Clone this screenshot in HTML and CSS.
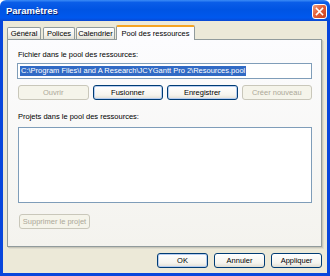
FILE: index.html
```html
<!DOCTYPE html>
<html lang="fr">
<head>
  <meta charset="UTF-8" />
  <title>Paramètres</title>
<link rel="stylesheet" href="styles.css">
</head>
<body>
  <div class="window">
    <div class="titlebar">
      <span class="title">Paramètres</span>
      <button class="close-button" aria-label="Fermer">
        <svg width="9" height="9" viewBox="0 0 9 9"><path d="M1.5 1.5 L7.5 7.5 M7.5 1.5 L1.5 7.5" stroke="#fff" stroke-width="1.6" stroke-linecap="square"/></svg>
      </button>
    </div>

    <div class="frame">
      <div class="tabs">
        <div class="tab tab-general">Général</div>
        <div class="tab tab-polices">Polices</div>
        <div class="tab tab-calendrier">Calendrier</div>
        <div class="tab tab-pool active">Pool des ressources</div>
      </div>

      <div class="panel">
        <label class="field-label">Fichier dans le pool des ressources:</label>
        <div class="text-input"><span class="selected">C:\Program Files\I and A Research\JCYGantt Pro 2\Resources.pool</span></div>

        <div class="button-row">
          <button class="btn" disabled>Ouvrir</button>
          <button class="btn focus">Fusionner</button>
          <button class="btn focus">Enregistrer</button>
          <button class="btn" disabled>Créer nouveau</button>
        </div>

        <label class="field-label second">Projets dans le pool des ressources:</label>
        <div class="listbox"></div>

        <div class="button-row bottom">
          <button class="btn" disabled>Supprimer le projet</button>
        </div>
      </div>

      <div class="footer">
        <button class="btn small focus">OK</button>
        <button class="btn small">Annuler</button>
        <button class="btn small">Appliquer</button>
      </div>
    </div>
  </div>
</body>
</html>
```

FILE: styles.css
```css
:root {
  --face: #ece9d8;
  --xp-blue: #0846dc;
  --btn-border: #003c74;
  --tab-border: #919b9c;
  --field-border: #7f9db9;
  --disabled: #aca899;
}

body {
  margin: 0;
  background: #fff;
  font-family: "Liberation Sans", Arial, sans-serif;
  font-size: 7.5px;
  color: #000;
}

.window {
  width: 330px;
  height: 276px;
  display: flex;
  flex-direction: column;
}

.titlebar {
  height: 21px;
  display: flex;
  align-items: center;
  justify-content: space-between;
  padding: 0 3px 0 6px;
  border-radius: 6px 6px 0 0;
  background: linear-gradient(#3b8cf6 0%, #0a5de8 12%, #0054e3 45%, #0058ee 85%, #0a48d2 100%);
  box-sizing: border-box;
}

.title {
  color: #fff;
  font-weight: bold;
  font-size: 9.5px;
  text-shadow: 1px 1px 0 #0a1e6e;
}

.close-button {
  width: 15px;
  height: 15px;
  padding: 0;
  margin-top: 1px;
  border: 1px solid #fff;
  border-radius: 3px;
  background: linear-gradient(135deg, #f0a080 0%, #e2603a 45%, #c8401c 100%);
  display: flex;
  align-items: center;
  justify-content: center;
}

.frame {
  flex: 1;
  display: flex;
  flex-direction: column;
  background: var(--face);
  border: 3px solid var(--xp-blue);
  border-top: none;
  padding: 3px 2px 5px 1px;
}

.tabs {
  display: flex;
  align-items: flex-end;
  height: 15px;
  margin-left: 3px;
}

.tab {
  height: 12px;
  line-height: 12px;
  text-align: center;
  margin-right: 1px;
  border: 1px solid var(--tab-border);
  border-bottom: none;
  border-radius: 2px 2px 0 0;
  background: linear-gradient(#fff, #f3f2ec 60%, #e3e1d6);
  box-sizing: border-box;
  white-space: nowrap;
}

.tab-general { width: 34px; margin-right: 2px; }
.tab-polices { width: 32px; }
.tab-calendrier { width: 39px; }
.tab-pool { width: 79px; }

.tab.active {
  height: 15px;
  line-height: 14px;
  background: #fcfcfe;
  border-top: 2px solid #f5a423;
  position: relative;
  top: 1px;
}

.panel {
  flex: 1;
  display: flex;
  flex-direction: column;
  margin-left: 3px;
  margin-right: 3px;
  padding: 10px 9px 0 9px;
  border: 1px solid var(--tab-border);
  background: linear-gradient(#fcfcfe, #f4f3ee);
  box-shadow: 1px 1px 0 #c9c7b9, 2px 2px 0 #dedccf;
}

.field-label {
  display: block;
  height: 9px;
  line-height: 9px;
  margin-left: 1px;
}

.field-label.second {
  margin-top: 12px;
}

.text-input {
  height: 16px;
  margin-top: 4px;
  border: 1px solid var(--field-border);
  background: #fff;
  box-sizing: border-box;
  display: flex;
  align-items: center;
  padding-left: 2px;
  white-space: nowrap;
  overflow: hidden;
}

.selected {
  background: #316ac5;
  color: #fff;
  line-height: 10px;
  padding: 0 1px;
}

.button-row {
  display: flex;
  gap: 4px;
  margin-top: 6px;
  margin-left: 1px;
}

.button-row.bottom {
  margin-top: 11px;
  margin-left: 2px;
}

.listbox {
  height: 76px;
  margin-top: 6px;
  margin-left: 1px;
  border: 1px solid var(--field-border);
  background: #fff;
  box-sizing: border-box;
}

.btn {
  width: 71px;
  height: 15px;
  padding: 0;
  font-family: inherit;
  font-size: 7.5px;
  color: #000;
  border: 1px solid var(--btn-border);
  border-radius: 3px;
  background: linear-gradient(#fff, #f5f4ee 70%, #e0ddd2);
  box-sizing: border-box;
}

.btn.focus {
  box-shadow: inset 0 0 0 1px #b6cdf0;
}

.btn:disabled {
  color: var(--disabled);
  border-color: #c9c7ba;
  background: #f5f4ea;
  box-shadow: none;
}

.footer {
  display: flex;
  justify-content: flex-end;
  gap: 6px;
  margin-top: 6px;
  margin-right: 3px;
}

.btn.small {
  width: 51px;
}
```
